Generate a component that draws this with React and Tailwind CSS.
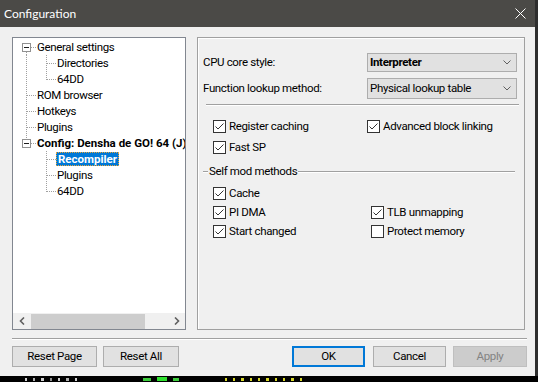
import React from 'react';

// tree connector cell, 20x16
function Gutter({ type }) {
  const dot = { stroke: '#a0a0a0', strokeWidth: 1, strokeDasharray: '1 1', shapeRendering: 'crispEdges' };
  return (
    <svg width="20" height="16" viewBox="0 0 20 16" className="shrink-0">
      {(type === 'pipe' || type === 'tee') && <line x1="10.5" y1="0" x2="10.5" y2="16" {...dot} />}
      {type === 'ell' && <line x1="10.5" y1="0" x2="10.5" y2="9" {...dot} />}
      {(type === 'tee' || type === 'ell') && <line x1="11" y1="8.5" x2="20" y2="8.5" {...dot} />}
      {type === 'boxFirst' && <line x1="10.5" y1="13" x2="10.5" y2="16" {...dot} />}
      {type === 'boxLast' && <line x1="10.5" y1="0" x2="10.5" y2="4" {...dot} />}
      {(type === 'boxFirst' || type === 'boxLast') && (
        <>
          <line x1="15" y1="8.5" x2="20" y2="8.5" {...dot} />
          <rect x="6.5" y="4.5" width="8" height="8" fill="#fff" stroke="#919191" shapeRendering="crispEdges" />
          <line x1="8" y1="8.5" x2="13" y2="8.5" stroke="#1e1e1e" shapeRendering="crispEdges" />
        </>
      )}
    </svg>
  );
}

function TreeRow({ cols, label, bold, selected }) {
  return (
    <div className="flex h-[16px] items-center whitespace-nowrap">
      {cols.map((c, i) => <Gutter key={i} type={c} />)}
      <span
        className={`h-[14px] flex items-center pl-[1px] pr-[2px] pt-[1px] leading-none ${bold ? 'font-bold tracking-normal' : ''} ${selected ? 'bg-[#0078d7] text-white outline outline-1 outline-dotted outline-[#e9a63a] -outline-offset-1 pl-[2px]' : 'text-black'}`}
      >
        {label}
      </span>
    </div>
  );
}

function Check({ checked, label }) {
  return (
    <div className="flex items-center h-[13px] gap-[3px] whitespace-nowrap">
      <span className="w-[13px] h-[13px] border border-[#333] bg-white flex items-center justify-center shrink-0">
        {checked && (
          <svg width="11" height="11" viewBox="0 0 11 11">
            <path d="M1.5 5.5 L4 8 L9.5 2.5" fill="none" stroke="#333" strokeWidth="1" />
          </svg>
        )}
      </span>
      <span className="text-black leading-none">{label}</span>
    </div>
  );
}

function Combo({ value, bold, h }) {
  return (
    <div className={`w-[150px] ${h} bg-[#e1e1e1] border border-[#adadad] flex items-center justify-between pl-[2px] pr-[5px]`}>
      <span className={`text-black ${bold ? 'font-bold' : ''}`}>{value}</span>
      <svg width="8" height="5" viewBox="0 0 8 5">
        <path d="M0.5 0.5 L4 4 L7.5 0.5" fill="none" stroke="#606060" strokeWidth="1" />
      </svg>
    </div>
  );
}

function Btn({ children, w, primary, disabled }) {
  return (
    <button
      type="button"
      className={`${w} h-[21px] flex items-center justify-center border ${
        primary
          ? 'bg-[#e1e1e1] border-[#0078d7] shadow-[inset_0_0_0_1px_#0078d7] text-black'
          : disabled
          ? 'bg-[#cccccc] border-[#bfbfbf] text-[#838383]'
          : 'bg-[#e1e1e1] border-[#adadad] text-black'
      }`}
    >
      {children}
    </button>
  );
}

export default function App() {
  return (
    <div className="w-[538px] h-[382px] flex flex-col bg-black overflow-hidden font-['Roboto',sans-serif] text-[11.5px] tracking-[-0.35px]">
      <div className="flex h-[376px]">
        <div className="w-[535px] flex flex-col bg-[#f0f0f0]">
          {/* title bar */}
          <div className="h-[27px] bg-[#4b4a47] flex items-center justify-between pl-[4px] pr-[9px]">
            <span className="text-white text-[12px] tracking-normal font-['Lato',sans-serif]">Configuration</span>
            <svg width="11" height="11" viewBox="0 0 11 11">
              <path d="M0.5 0.5 L10.5 10.5 M10.5 0.5 L0.5 10.5" stroke="#fff" strokeWidth="1" />
            </svg>
          </div>

          {/* body */}
          <div className="flex gap-[11px] pl-[12px] pt-[10px]">
            {/* tree */}
            <div className="w-[174px] h-[293px] border border-[#828790] bg-white flex flex-col">
              <div className="flex-1 overflow-hidden pl-[3px] pt-[1px]">
                <TreeRow cols={['boxFirst']} label="General settings" />
                <TreeRow cols={['pipe', 'tee']} label="Directories" />
                <TreeRow cols={['pipe', 'ell']} label="64DD" />
                <TreeRow cols={['tee']} label="ROM browser" />
                <TreeRow cols={['tee']} label="Hotkeys" />
                <TreeRow cols={['tee']} label="Plugins" />
                <TreeRow cols={['boxLast']} label="Config: Densha de GO! 64 (J)" bold />
                <TreeRow cols={['none', 'tee']} label="Recompiler" bold selected />
                <TreeRow cols={['none', 'tee']} label="Plugins" />
                <TreeRow cols={['none', 'ell']} label="64DD" />
              </div>
              <div className="h-[16px] bg-[#f0f0f0] flex items-center">
                <div className="w-[17px] h-full flex items-center justify-center">
                  <svg width="6" height="8" viewBox="0 0 6 8">
                    <path d="M5 0.5 L1.5 4 L5 7.5" fill="none" stroke="#606060" strokeWidth="1.6" />
                  </svg>
                </div>
                <div className="flex-1 h-full flex items-center pl-[1px]">
                  <div className="w-[114px] h-[15px] bg-[#cdcdcd]" />
                </div>
                <div className="w-[17px] h-full flex items-center justify-center">
                  <svg width="6" height="8" viewBox="0 0 6 8">
                    <path d="M1 0.5 L4.5 4 L1 7.5" fill="none" stroke="#606060" strokeWidth="1.6" />
                  </svg>
                </div>
              </div>
            </div>

            {/* settings page */}
            <div className="w-[328px] h-[293px] border border-[#a0a0a0] shadow-[inset_1px_1px_0_#fff] pl-[5px] pt-[15px] flex flex-col">
              <div className="flex items-center">
                <span className="w-[164px] text-black">CPU core style:</span>
                <Combo value="Interpreter" bold h="h-[19px]" />
              </div>
              <div className="flex items-center mt-[6px]">
                <span className="w-[164px] text-black">Function lookup method:</span>
                <Combo value="Physical lookup table" h="h-[21px]" />
              </div>
              <div className="ml-[3px] mt-[5px] w-[313px] h-[2px] border-t border-[#a0a0a0] bg-white" />

              <div className="pl-[10px] mt-[14px] grid grid-cols-[154px_1fr] gap-y-[8px]">
                <Check checked label="Register caching" />
                <Check checked label="Advanced block linking" />
                <Check checked label="Fast SP" />
              </div>

              <div className="mt-[10px] h-[16px] flex items-center w-[312px]">
                <div className="w-[5px] h-[2px] border-t border-[#a0a0a0] bg-white" />
                <span className="px-[1px] text-black leading-none">Self mod methods</span>
                <div className="flex-1 h-[2px] border-t border-[#a0a0a0] bg-white" />
              </div>

              <div className="pl-[10px] mt-[7px] grid grid-cols-[158px_1fr] gap-y-[6px]">
                <Check checked label="Cache" />
                <span />
                <Check checked label="PI DMA" />
                <Check checked label="TLB unmapping" />
                <Check checked label="Start changed" />
                <Check label="Protect memory" />
              </div>
            </div>
          </div>

          <div className="ml-[12px] mt-[8px] w-[515px] h-[2px] border-t border-[#a0a0a0] bg-white" />

          {/* buttons */}
          <div className="flex items-center pl-[12px] pr-[8px] mt-[6px]">
            <Btn w="w-[85px]">Reset Page</Btn>
            <div className="w-[6px]" />
            <Btn w="w-[76px]">Reset All</Btn>
            <div className="flex-1" />
            <Btn w="w-[73px]" primary>OK</Btn>
            <div className="w-[8px]" />
            <Btn w="w-[73px]">Cancel</Btn>
            <div className="w-[7px]" />
            <Btn w="w-[74px]" disabled>Apply</Btn>
          </div>
        </div>
        <div className="w-[3px] bg-[#2e2e2e]" />
      </div>

      {/* desktop behind the window */}
      <div className="h-[6px] bg-black flex items-end pb-[1px] pl-[25px] gap-[6px]">
        <span className="w-[2px] h-[3px] bg-[#d0d0d0]" />
        <span className="w-[2px] h-[3px] bg-[#b0b0b0]" />
        <span className="w-[3px] h-[3px] bg-[#d0d0d0]" />
        <span className="w-[2px] h-[3px] bg-[#909090]" />
        <span className="w-[2px] h-[3px] bg-[#d0d0d0]" />
        <span className="w-[3px] h-[3px] bg-[#b0b0b0]" />
        <span className="w-[2px] h-[3px] bg-[#d0d0d0]" />
        <span className="ml-[60px] w-[8px] h-[3px] bg-[#3ccc3c]" />
        <span className="w-[10px] h-[4px] bg-[#2ee02e]" />
        <span className="w-[6px] h-[3px] bg-[#3ccc3c]" />
        <span className="ml-[40px] w-[2px] h-[3px] bg-[#d6d62a]" />
        <span className="w-[2px] h-[3px] bg-[#d6d62a]" />
        <span className="w-[3px] h-[3px] bg-[#d6d62a]" />
        <span className="w-[2px] h-[3px] bg-[#d6d62a]" />
        <span className="w-[2px] h-[3px] bg-[#d6d62a]" />
        <span className="w-[3px] h-[3px] bg-[#d6d62a]" />
        <span className="w-[2px] h-[3px] bg-[#d6d62a]" />
        <span className="w-[2px] h-[3px] bg-[#d6d62a]" />
        <span className="w-[3px] h-[3px] bg-[#d6d62a]" />
        <span className="w-[2px] h-[3px] bg-[#d6d62a]" />
      </div>
    </div>
  );
}
